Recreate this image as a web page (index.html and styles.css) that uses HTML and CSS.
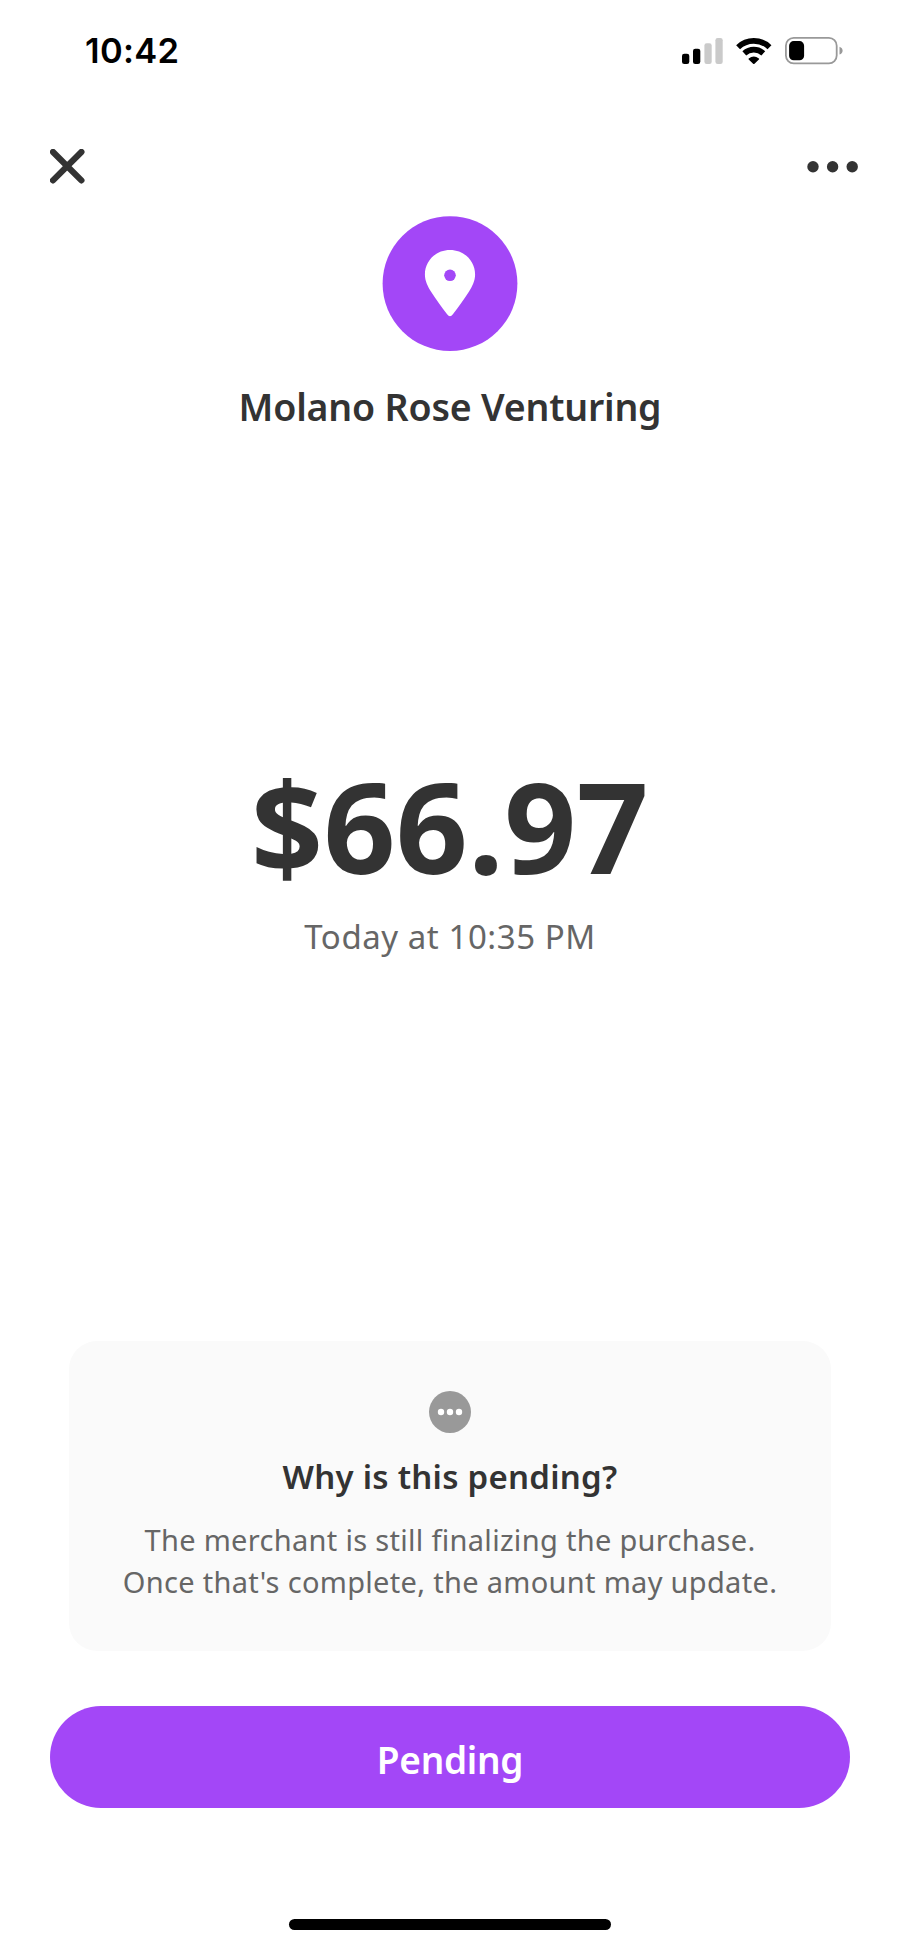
FILE: index.html
```html
<!DOCTYPE html>
<html lang="en">
<head>
<meta charset="utf-8">
<title>Payment details</title>
<link rel="stylesheet" href="styles.css">
</head>
<body>
<main class="screen">
  <div class="status">
    <span class="clock">10:42</span>
    <svg class="status-icons" width="162" height="30" viewBox="682 36 162 30">
      <rect x="682" y="53.7" width="7.3" height="10.3" rx="2.3"/>
      <rect x="693" y="48.8" width="7.3" height="15.2" rx="2.3"/>
      <g fill="#cacaca"><rect x="704.4" y="43.3" width="7.3" height="20.7" rx="2.3"/><rect x="715.4" y="38" width="7.3" height="26" rx="2.3"/></g>
      <g fill="none" stroke="#000" stroke-width="5.6">
        <path d="M738.1 47.2a22.6 22.6 0 0 1 31.4 0"/>
        <path d="M744.3 53.4a13.8 13.8 0 0 1 19 0"/>
      </g>
      <path d="M748.7 58.6q5.1-4.4 10.2 0q.5.5 0 1l-4.400 4.100q-.7.6-1.400 0l-4.400-4.100q-.5-.5 0-1z"/>
      <rect x="785.9" y="37.9" width="50.8" height="25.5" rx="7.8" fill="none" stroke="#999" stroke-width="1.8"/>
      <rect x="789.1" y="41.1" width="15" height="19.2" rx="4.6"/>
      <path d="M839.5 46.8q3.1 1.2 3.1 3.9t-3.1 3.9z" fill="#999"/>
    </svg>
  </div>
  <nav class="nav">
    <svg width="35" height="35" viewBox="0 0 35 35"><path d="M3 3l28.400 28.400M31.400 3L3 31.400" stroke="#333" stroke-width="6.2" stroke-linecap="round"/></svg>
    <svg width="52" height="12" viewBox="0 0 52 12" fill="#333"><circle cx="6" cy="5.7" r="5.7"/><circle cx="25.6" cy="5.7" r="5.7"/><circle cx="45.2" cy="5.7" r="5.7"/></svg>
  </nav>
  <header class="merchant">
    <svg width="136" height="136" viewBox="382 216 136 136">
      <circle cx="450" cy="283.6" r="67.4" fill="#a347f7"/>
      <path d="M450 250c-14.3 0-25.1 11-25.1 24.5 0 6.400 2.800 11.800 6.200 17.200 4.600 7.300 10.500 15.200 16 22.600q2.900 3.700 5.800 0c5.500-7.400 11.400-15.300 16-22.600 3.400-5.400 6.200-10.800 6.200-17.200C475.100 261 464.300 250 450 250z" fill="#fff"/>
      <circle cx="450" cy="275.3" r="5.8" fill="#a347f7"/>
    </svg>
    <h1 class="name">Molano Rose Venturing</h1>
  </header>
  <section class="payment">
    <div class="amount">$66.97</div>
    <div class="date">Today at 10:35 PM</div>
  </section>
  <section class="card">
    <svg width="42" height="42" viewBox="0 0 42 42"><circle cx="21" cy="21" r="21" fill="#999"/><g fill="#fff"><circle cx="12" cy="21" r="3.2"/><circle cx="21" cy="21" r="3.2"/><circle cx="30" cy="21" r="3.2"/></g></svg>
    <h2 class="question">Why is this pending?</h2>
    <p class="answer"><span class="line-one">The merchant is still finalizing the purchase.</span><br><span class="line-two">Once that's complete, the amount may update.</span></p>
  </section>
  <button class="pending">Pending</button>
  <div class="home"></div>
</main>
</body>
</html>
```
FILE: styles.css
```css
* { box-sizing: border-box; margin: 0; }
body { background: #fff; }
svg { display: block; flex: none; }
.screen {
  width: 900px;
  height: 1947px;
  display: flex;
  flex-direction: column;
  align-items: center;
  font-family: "Noto Sans", sans-serif;
  color: #333;
  overflow: hidden;
}
.status {
  width: 100%;
  height: 66px;
  padding: 36px 56px 0 85px;
  display: flex;
  justify-content: space-between;
}
.clock {
  font: 600 34.500px/30px Inter, sans-serif;
  letter-spacing: .3px;
  color: #000;
}
.nav {
  width: 100%;
  padding: 0 41px 0 50px;
  margin-top: 83px;
  display: flex;
  justify-content: space-between;
  align-items: center;
}
.merchant {
  margin-top: 32px;
  display: flex;
  flex-direction: column;
  align-items: center;
}
.name {
  margin-top: 31px;
  font-size: 37.500px;
  line-height: 48px;
  font-weight: 600;
  letter-spacing: -.2px;
  white-space: nowrap;
}
.payment {
  margin-top: 319px;
  text-align: center;
}
.amount {
  font-size: 126px;
  line-height: 150px;
  font-weight: 660;
  letter-spacing: .4px;
  white-space: nowrap;
}
.date {
  margin-top: 15px;
  font-size: 33px;
  line-height: 44px;
  letter-spacing: .55px;
  color: #666;
}
.card {
  width: 762px;
  height: 310px;
  margin-top: 382px;
  padding-top: 50px;
  border-radius: 28px;
  background: #fafafa;
  display: flex;
  flex-direction: column;
  align-items: center;
}
.question {
  margin-top: 22px;
  font-size: 33px;
  line-height: 44px;
  font-weight: 620;
  letter-spacing: .25px;
}
.answer {
  margin-top: 20px;
  font-size: 29px;
  line-height: 42px;
  letter-spacing: .31px;
  text-align: center;
  white-space: nowrap;
  color: #666;
}
.pending {
  width: 800px;
  height: 102px;
  margin-top: 55px;
  padding: 5px 0 0;
  border: 0;
  border-radius: 51px;
  background: #a347f7;
  color: #fff;
  font: 600 37px/48px "Noto Sans", sans-serif;
  letter-spacing: -.3px;
}
.home {
  width: 322px;
  height: 11px;
  margin-top: 111px;
  border-radius: 6px;
  background: #000;
}
```
